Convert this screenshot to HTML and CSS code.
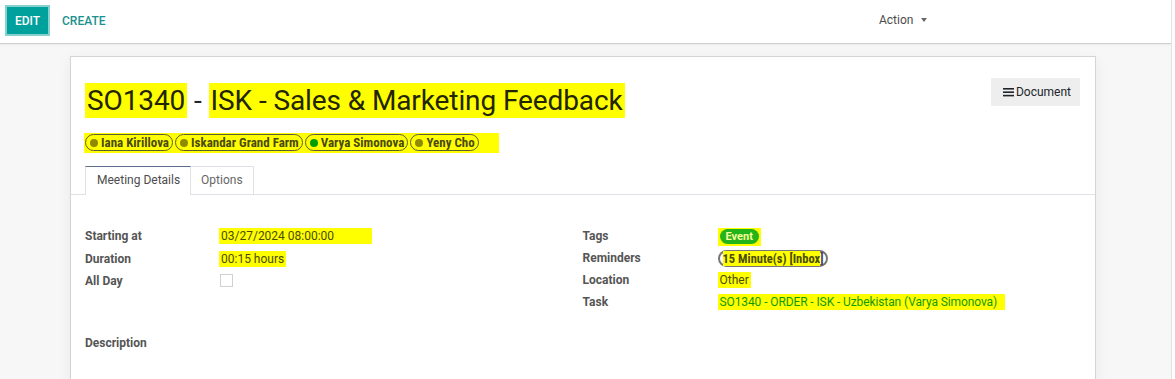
FILE: index.html
```html
<!DOCTYPE html>
<html lang="en">
<head>
    <meta charset="UTF-8">
    <title>SO1340 - ISK - Sales &amp; Marketing Feedback</title>
    <link rel="stylesheet" href="styles.css">
</head>
<body>
    <div class="app">
        <div class="control-panel">
            <div class="buttons">
                <button class="btn-edit">EDIT</button>
                <button class="btn-create">CREATE</button>
            </div>
            <div class="action">Action <span class="caret"></span></div>
        </div>

        <div class="content">
            <div class="sheet">
                <div class="sheet-top">
                    <h1 class="title"><span class="hl">SO1340</span> - <span class="hl">ISK - Sales &amp; Marketing Feedback</span></h1>
                    <button class="btn-doc">
                        <svg width="11" height="10" viewBox="0 0 11 10"><rect x="0" y="1" width="11" height="1.6" fill="#212529"/><rect x="0" y="4.4" width="11" height="1.6" fill="#212529"/><rect x="0" y="7.8" width="11" height="1.6" fill="#212529"/></svg>Document
                    </button>
                </div>

                <div class="attendees">
                    <span class="tag"><i class="dot"></i>Iana Kirillova</span>
                    <span class="tag"><i class="dot"></i>Iskandar Grand Farm</span>
                    <span class="tag"><i class="dot green"></i>Varya Simonova</span>
                    <span class="tag"><i class="dot"></i>Yeny Cho</span>
                </div>

                <div class="tabs">
                    <div class="tab active">Meeting Details</div>
                    <div class="tab">Options</div>
                </div>

                <div class="groups">
                    <div class="group">
                        <div class="row"><span class="label">Starting at</span><span class="value"><span class="hl wide">03/27/2024 08:00:00</span></span></div>
                        <div class="row"><span class="label">Duration</span><span class="value"><span class="hl">00:15 hours</span></span></div>
                        <div class="row"><span class="label">All Day</span><span class="value"><span class="check"></span></span></div>
                    </div>
                    <div class="group">
                        <div class="row"><span class="label">Tags</span><span class="value"><span class="hl tight"><span class="event">Event</span></span></span></div>
                        <div class="row"><span class="label">Reminders</span><span class="value"><span class="reminder"><span class="hl-in">15 Minute(s) [Inbox</span>]</span></span></div>
                        <div class="row"><span class="label">Location</span><span class="value"><span class="hl">Other</span></span></div>
                        <div class="row"><span class="label">Task</span><span class="value"><span class="hl link">SO1340 - ORDER - ISK - Uzbekistan (Varya Simonova)</span></span></div>
                    </div>
                </div>

                <div class="description">Description</div>
            </div>
        </div>
    </div>
</body>
</html>
```

FILE: styles.css
```css
body {
    margin: 0;
    font-family: Roboto, "Noto Sans", sans-serif;
    font-size: 12px;
    color: #4c4c4c;
    background: #ffffff;
}
.app {
    width: 1171px;
    height: 379px;
    border-right: 1px solid #e2e2e2;
    overflow: hidden;
}
.control-panel {
    height: 44px;
    box-sizing: border-box;
    border-bottom: 1px solid #cfcfcf;
    display: flex;
    align-items: flex-start;
    padding-top: 5px;
    background: #fff;
    box-shadow: 0 1px 2px rgba(0, 0, 0, 0.06);
    position: relative;
}
.buttons {
    display: flex;
    align-items: center;
    width: 860px;
    padding-left: 5px;
}
.buttons button {
    font-family: Roboto, sans-serif;
    font-size: 12px;
    font-weight: 500;
    border: none;
    cursor: pointer;
}
.btn-edit {
    background: #00a09d;
    color: #fff;
    width: 45px;
    height: 31px;
    border: 2px solid #86d0cd !important;
    padding: 0;
}
.btn-create {
    background: none;
    color: #1b918e;
    margin-left: 6px;
    padding: 0 6px;
}
.action {
    margin-left: 14px;
    line-height: 30px;
    color: #4c4c4c;
    font-size: 12px;
}
.caret {
    display: inline-block;
    margin-left: 5px;
    vertical-align: 2px;
    border-top: 4px solid #666;
    border-left: 3px solid transparent;
    border-right: 3px solid transparent;
}
.content {
    background: #f7f7f7;
    height: 335px;
    padding-top: 12px;
    padding-left: 70px;
}
.sheet {
    width: 1024px;
    height: 330px;
    background: #fff;
    border: 1px solid #d4d4d4;
    box-shadow: 0 4px 14px rgba(0, 0, 0, 0.06);
}
.sheet-top {
    display: flex;
    justify-content: space-between;
    padding: 21px 15px 0 14px;
}
.title {
    margin: 0;
    margin-top: 6px;
    font-size: 28px;
    font-weight: 400;
    line-height: 34px;
    color: #21252a;
    letter-spacing: -0.1px;
}
.title .hl {
    color: #232500;
}
.hl {
    background: #ffff00;
    color: #4b4c00;
    padding: 1px 2px;
}
.hl.wide {
    padding-right: 38px;
}
.hl.tight {
    padding: 1px 2px 3px 2px;
}
.hl.link {
    color: #119a00;
    padding-right: 8px;
    letter-spacing: -0.1px;
}
.btn-doc {
    display: flex;
    align-items: center;
    gap: 2px;
    height: 28px;
    padding: 0 9px 0 12px;
    background: #eeeeee;
    border: none;
    font-family: Roboto, sans-serif;
    font-size: 12px;
    color: #212529;
}
.attendees {
    display: flex;
    gap: 2px;
    margin: 15px 0 0 13px;
    padding: 1px 20px 2px 1px;
    background: #ffff00;
    width: fit-content;
}
.tag {
    display: flex;
    align-items: center;
    height: 15px;
    padding: 0 3px 0 4px;
    border: 1px solid #5d5d34;
    border-radius: 9px;
    font-size: 13px;
    font-weight: 700;
    font-stretch: condensed;
    color: #4a4a10;
}
.dot {
    width: 8px;
    height: 8px;
    border-radius: 50%;
    background: #8f8a00;
    margin-right: 3px;
}
.dot.green {
    background: #009e00;
}
.tabs {
    display: flex;
    margin-top: 13px;
    padding-left: 14px;
    border-bottom: 1px solid #dee2e6;
}
.tab {
    height: 27px;
    line-height: 27px;
    padding: 0 10px;
    border: 1px solid #dee2e6;
    border-bottom: none;
    margin-bottom: -1px;
    color: #666;
}
.tab.active {
    border-top: 1px solid #5e6d8d;
    background: #fff;
    color: #4c4c4c;
    height: 28px;
    padding: 0 10px 0 11px;
}
.tab + .tab {
    border-left: none;
}
.groups {
    display: flex;
    padding: 30px 15px 0 14px;
}
.group {
    width: 498px;
}
.row {
    display: flex;
    align-items: center;
    height: 22px;
}
.group:first-child .row:nth-child(2) {
    height: 23px;
}
.label {
    flex-shrink: 0;
    width: 134px;
    font-weight: 700;
    color: #555;
}
.group + .group .label {
    width: 135px;
}
.check {
    display: inline-block;
    width: 11px;
    height: 11px;
    border: 1px solid #d0d0d0;
    margin-left: 1px;
    margin-top: 2px;
}
.event {
    display: inline-block;
    background: #22b41a;
    color: #fbfd9a;
    font-size: 11px;
    font-weight: 700;
    padding: 1px 6px;
    border-radius: 8px;
}
.reminder {
    display: inline-block;
    border: 2px solid #777;
    border-radius: 9px;
    padding: 0 3px 0 3px;
    font-size: 12.5px;
    font-weight: 700;
    font-stretch: condensed;
    color: #444;
    line-height: 13px;
}
.hl-in {
    background: #ffff00;
    color: #4b4c00;
}
.description {
    margin: 23px 0 0 14px;
    font-weight: 700;
    color: #555;
}
```
